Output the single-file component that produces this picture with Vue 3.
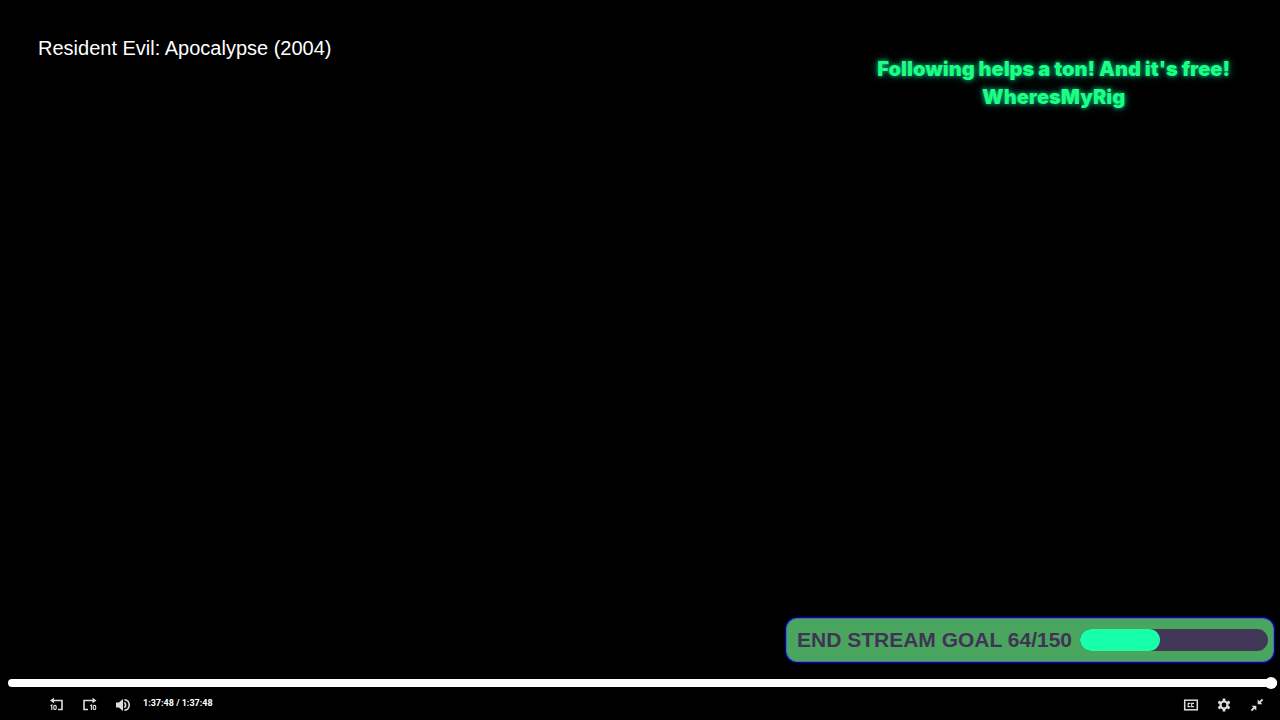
<script setup>
import { ref, computed } from 'vue'

const title = 'Resident Evil: Apocalypse (2004)'
const duration = 5868
const position = ref(duration)
const goal = { current: 64, target: 150 }

const goalWidth = computed(() => `${(goal.current / goal.target) * 100}%`)

function clock(value) {
  const total = Number(value)
  const pad = (n) => String(n).padStart(2, '0')
  return `${Math.floor(total / 3600)}:${pad(Math.floor(total / 60) % 60)}:${pad(total % 60)}`
}
</script>

<template>
  <main class="player">
    <header class="top">
      <h1 class="title">{{ title }}</h1>
      <p class="shout">Following helps a ton! And it's free!<br />WheresMyRig</p>
    </header>

    <footer class="bottom">
      <section class="goal">
        <span id="goal-label" class="goal-label">END STREAM GOAL {{ goal.current }}/{{ goal.target }}</span>
        <div
          class="goal-track"
          role="progressbar"
          aria-labelledby="goal-label"
          :aria-valuenow="goal.current"
          aria-valuemin="0"
          :aria-valuemax="goal.target"
        >
          <div class="goal-fill" :style="{ width: goalWidth }"></div>
        </div>
      </section>

      <input v-model="position" class="seek" type="range" min="0" :max="duration" aria-label="Seek" />

      <div class="controls">
        <div class="group">
          <button type="button" aria-label="Back 10 seconds">
            <svg viewBox="0 0 16 16">
              <path d="M4 3.5H13V12.5H9" fill="none" stroke="currentColor" stroke-width="1.6" />
              <path d="M1 3.5L5 0.8V6.2Z" fill="currentColor" />
              <path d="M1.5 8.7L2.8 8V13" fill="none" stroke="currentColor" stroke-width="1.2" />
              <rect x="4.8" y="8.4" width="2.4" height="4" rx="1" fill="none" stroke="currentColor" stroke-width="1.1" />
            </svg>
          </button>
          <button type="button" aria-label="Forward 10 seconds">
            <svg viewBox="0 0 16 16">
              <path d="M11 3.5H2V12.5H6" fill="none" stroke="currentColor" stroke-width="1.6" />
              <path d="M14.5 3.5L10.5 0.8V6.2Z" fill="currentColor" />
              <path d="M8.2 8.7L9.5 8V13" fill="none" stroke="currentColor" stroke-width="1.2" />
              <rect x="11.3" y="8.4" width="2.4" height="4" rx="1" fill="none" stroke="currentColor" stroke-width="1.1" />
            </svg>
          </button>
          <button type="button" aria-label="Mute">
            <svg viewBox="0 0 16 16">
              <path d="M1 5.6H3.8L8 2V14L3.8 10.4H1Z" fill="currentColor" />
              <path d="M9.4 5.2Q11.8 8 9.4 10.8" fill="none" stroke="currentColor" stroke-width="1.7" />
              <path d="M9.4 2.7C15.8 3.4 15.8 12.6 9.4 13.3" fill="none" stroke="currentColor" stroke-width="1.6" />
            </svg>
          </button>
          <span class="time">{{ clock(position) }} / {{ clock(duration) }}</span>
        </div>
        <div class="group">
          <button type="button" aria-label="Captions">
            <svg viewBox="0 0 16 16">
              <rect x="1.7" y="3.2" width="12.6" height="9.6" fill="none" stroke="currentColor" stroke-width="1.5" />
              <path d="M7.5 6.3H5.2V9.7H7.5M11 6.3H8.7V9.7H11" fill="none" stroke="currentColor" stroke-width="1.2" />
            </svg>
          </button>
          <button type="button" aria-label="Settings">
            <svg viewBox="0 0 16 16">
              <circle cx="8" cy="8" r="3.5" fill="none" stroke="currentColor" stroke-width="2.2" />
              <path
                d="M8 1.6V4M8 12V14.4M2.4 4.8L4.5 6M11.5 10L13.6 11.2M2.4 11.2L4.5 10M11.5 6L13.6 4.8"
                fill="none"
                stroke="currentColor"
                stroke-width="2.8"
              />
            </svg>
          </button>
          <button type="button" aria-label="Exit full screen">
            <svg viewBox="0 0 16 16">
              <path d="M13.6 2.4L10 6M2.4 13.6L6 10" fill="none" stroke="currentColor" stroke-width="1.8" />
              <path d="M8.7 2.6V7.3H13.4ZM2.6 8.7H7.3V13.4Z" fill="currentColor" />
            </svg>
          </button>
        </div>
      </div>
    </footer>
  </main>
</template>

<style>
body {
  background: #000;
}
</style>

<style scoped>
.player {
  box-sizing: border-box;
  min-height: 100vh;
  display: flex;
  flex-direction: column;
  justify-content: space-between;
  background: #000;
  color: #fff;
  font-family: "Liberation Sans", Arial, sans-serif;
}

.top {
  display: flex;
  justify-content: space-between;
  align-items: flex-start;
  padding: 36px 50px 0 38px;
}

.title {
  margin: 0;
  font-size: 20px;
  line-height: 24px;
  font-weight: 400;
}

.shout {
  margin: 19px 0 0;
  color: #1cff80;
  font-family: Inter, "Open Sans", sans-serif;
  font-size: 20px;
  line-height: 28px;
  font-weight: 900;
  text-align: center;
  text-shadow: 0 0 4px #00a878, 0 0 9px #008468;
}

.bottom {
  display: flex;
  flex-direction: column;
}

.goal {
  box-sizing: border-box;
  align-self: flex-end;
  display: flex;
  align-items: center;
  gap: 8px;
  width: 488px;
  max-width: 100%;
  height: 44px;
  margin-right: 6px;
  padding: 0 5px 0 10px;
  border: 1px solid #486dab;
  border-radius: 11px;
  background: #4aa55f;
  box-shadow: 0 0 0 1px #0000b4;
}

.goal-label {
  color: #403456;
  font-size: 21px;
  line-height: 24px;
  font-weight: 700;
  white-space: nowrap;
}

.goal-track {
  flex: 1;
  height: 22px;
  border-radius: 11px;
  background: #403856;
  overflow: hidden;
}

.goal-fill {
  height: 100%;
  border-radius: 11px;
  background: #18ffaa;
}

.seek {
  appearance: none;
  display: block;
  height: 12px;
  margin: 15px 3px 0 8px;
  background: transparent;
}

.seek::-webkit-slider-runnable-track {
  height: 8px;
  border-radius: 4px;
  background: #fff;
}

.seek::-webkit-slider-thumb {
  appearance: none;
  width: 12px;
  height: 12px;
  margin-top: -2px;
  border-radius: 50%;
  background: #fff;
}

.controls {
  display: flex;
  justify-content: space-between;
  height: 31px;
  padding: 0 15px 0 49px;
}

.group {
  display: flex;
  align-items: center;
  gap: 17px;
}

button {
  width: 16px;
  height: 16px;
  padding: 0;
  border: 0;
  background: none;
  color: #ddd;
  cursor: pointer;
}

svg {
  display: block;
  width: 16px;
  height: 16px;
}

.time {
  margin: 0 0 4px -5px;
  font-family: Roboto, "Liberation Sans", sans-serif;
  font-size: 9px;
  line-height: 12px;
  font-weight: 700;
}
</style>
